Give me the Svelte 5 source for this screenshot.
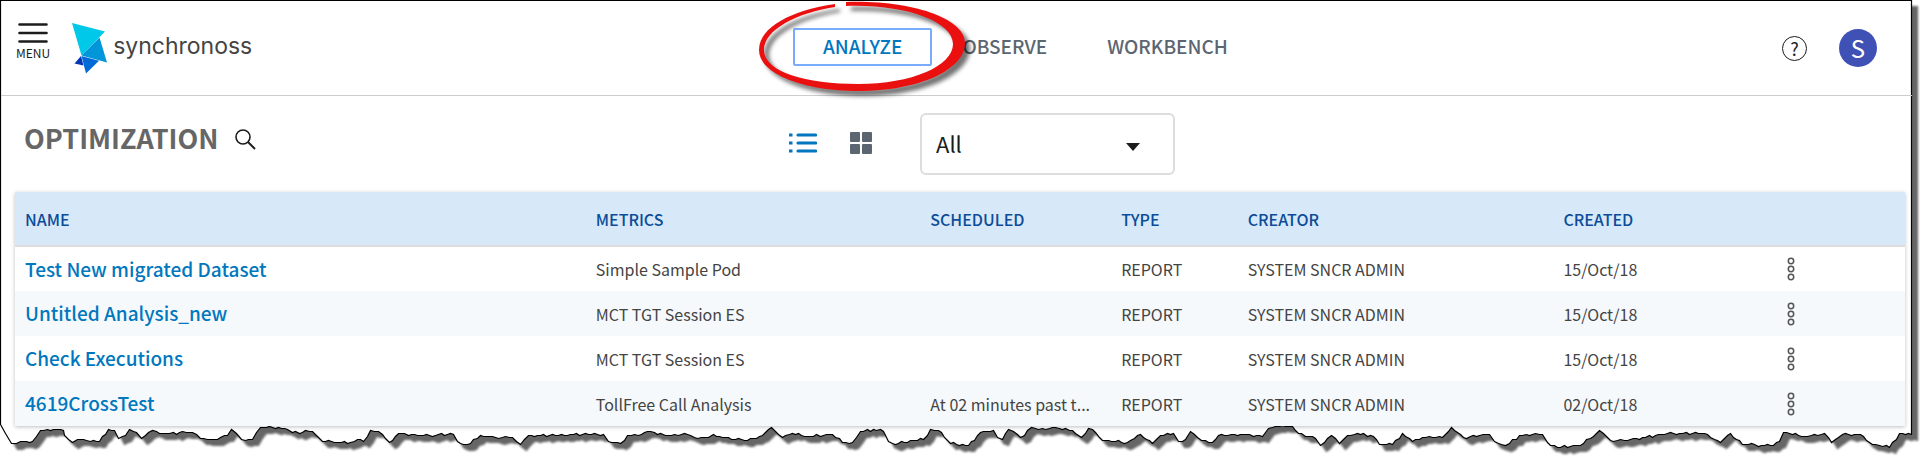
<script>
  const navItems = ['ANALYZE', 'OBSERVE', 'WORKBENCH'];
  let active = $state('ANALYZE');
  let filter = $state('All');

  const columns = [
    { label: 'NAME', key: 'name' },
    { label: 'METRICS', key: 'metrics' },
    { label: 'SCHEDULED', key: 'scheduled' },
    { label: 'TYPE', key: 'type' },
    { label: 'CREATOR', key: 'creator' },
    { label: 'CREATED', key: 'created' }
  ];

  const rows = [
    { name: 'Test New migrated Dataset', metrics: 'Simple Sample Pod', scheduled: '', created: '15/Oct/18' },
    { name: 'Untitled Analysis_new', metrics: 'MCT TGT Session ES', scheduled: '', created: '15/Oct/18' },
    { name: 'Check Executions', metrics: 'MCT TGT Session ES', scheduled: '', created: '15/Oct/18' },
    { name: '4619CrossTest', metrics: 'TollFree Call Analysis', scheduled: 'At 02 minutes past t...', created: '02/Oct/18' }
  ].map((r) => ({ ...r, type: 'REPORT', creator: 'SYSTEM SNCR ADMIN' }));

  // Key points of the torn lower edge, as x,y pairs
  const tear = `0,424 5,433 11,443 16,443 23,441 32,441 40,430 53,429 63,430 64,435 72,442 77,439 99,441 108,429 114,430 118,438 125,435 129,429 136,432 141,438 152,430 163,433 192,432 200,438 217,439 220,437 227,435 231,429 236,433 241,439 252,439 260,427 278,427 287,429 292,432 312,431 317,436 322,441 350,442 357,439 363,441 370,430 378,431 389,442 398,433 417,435 453,434 457,441 463,444 470,443 480,435
495,437 512,437 520,444 528,435 603,434 608,441 620,443 627,435 638,435 647,431 660,433 665,435 687,434 697,438 708,437 713,434 722,437 747,440 762,435 771,427 782,437 792,433 807,436 832,434 842,442 852,442 860,431 873,429 883,431 888,441 895,444 910,440 923,439 930,429 938,430 950,443 968,445
980,432 993,430 997,437 1002,439 1008,429 1013,431 1020,437 1031,427 1038,429 1052,427 1072,430 1081,437 1088,428 1095,432 1102,440 1127,442 1140,434 1152,443 1160,435 1173,433 1178,441 1185,439 1190,431 1201,440 1212,442 1218,435 1243,434 1262,436 1268,428 1282,425 1292,426 1298,433 1315,438 1320,445 1331,435 1339,443 1347,435 1357,433 1373,436 1379,444 1392,444 1402,433 1412,441 1422,437 1442,437
1451,427 1463,437 1489,434 1494,441 1505,445 1519,435 1542,434 1547,442 1557,447 1580,445 1599,430 1610,440 1627,440 1667,433 1704,433 1720,442 1730,433 1742,444 1770,445 1779,441 1783,432 1804,436 1824,433 1831,442 1842,434 1860,434 1872,444 1889,447 1899,433 1911,434`
    .trim()
    .split(/\s+/)
    .map((p) => p.split(',').map(Number));

  // Adds small steps between the key points so the paper edge looks rough
  function roughen(points) {
    const out = [points[0]];
    const steps = [0, -1, 0, 1, 0, 0, -1, 1, 0, -1, 0];
    let n = 0;
    for (let i = 1; i < points.length; i++) {
      const [x0, y0] = points[i - 1];
      const [x1, y1] = points[i];
      const count = Math.floor((x1 - x0) / 3);
      for (let k = 1; k < count; k++) {
        const t = k / count;
        out.push([Math.round(x0 + (x1 - x0) * t), Math.round(y0 + (y1 - y0) * t) + steps[n++ % steps.length]]);
      }
      out.push([x1, y1]);
    }
    return out;
  }

  const sheet =
    'M0.5 0.5H1911.5V434.5' +
    roughen(tear)
      .reverse()
      .map(([x, y]) => `L${x + 0.5} ${y + 0.5}`)
      .join('') +
    'Z';
</script>

<div class="page">
  <svg class="sheet" viewBox="0 0 1927 470" preserveAspectRatio="none" aria-hidden="true">
    <path d={sheet} fill="#fff" stroke="#000" stroke-width="1.200" vector-effect="non-scaling-stroke" />
  </svg>

  <div class="content">
    <header>
      <div class="brand">
        <button class="menu">
          <svg width="30" height="20" viewBox="0 0 30 20" aria-hidden="true">
            <path d="M1.5 1.5h27M1.5 10h27M1.5 18.5h27" stroke="#1c1c1c" stroke-width="2.6" stroke-linecap="round" />
          </svg>
          <span>MENU</span>
        </button>
        <a class="logo" href="#home">
          <svg width="36" height="51" viewBox="0 0 36 51" aria-hidden="true">
            <path d="M0 0l33 8.500L9.500 32.500z" fill="#00c8e8" />
            <path d="M27.500 14.500L35 39.500 9.500 32.500z" fill="#0096d9" />
            <path d="M9.500 33L27 37.800 14 50.500z" fill="#006ad6" />
            <path d="M9 33L2.500 40.500l9 2z" fill="#0038b6" />
          </svg>
          <span>synchronoss</span>
        </a>
      </div>

      <nav>
        {#each navItems as item}
          <a href={'#' + item.toLowerCase()} class:active={active === item} onclick={() => (active = item)}>
            {item}
            {#if item === 'ANALYZE'}
              <svg class="marker" width="220" height="100" viewBox="0 0 220 100" aria-hidden="true">
                <path
                  fill="#eb1010"
                  d="M81 4C38 10 5 27 5 50C5 74 50 91 104 91C165 91 211 70 211 43C211 19 160 0 92 2V6C150 4 199 21 199 44C199 66 158 84 104 84C52 84 10 72 10 50C10 30 42 13 81 7Z"
                />
              </svg>
            {/if}
          </a>
        {/each}
      </nav>

      <div class="account">
        <button class="help" aria-label="Help">?</button>
        <button class="avatar" aria-label="Account">S</button>
      </div>
    </header>

    <section class="toolbar">
      <div class="heading">
        <h1>OPTIMIZATION</h1>
        <button class="icon" aria-label="Search">
          <svg width="21" height="21" viewBox="0 0 21 21" fill="none" stroke="#1c1c1c" stroke-width="1.600">
            <circle cx="8" cy="8" r="7" />
            <path d="M13 13l7 7" stroke-width="2" />
          </svg>
        </button>
      </div>

      <div class="tools">
        <button class="icon" aria-label="List view">
          <svg width="28" height="22" viewBox="0 0 28 22" fill="none" stroke="#0077be" stroke-width="3.200">
            <path d="M0 3h3.500M0 11h3.500M0 19h3.500" />
            <path d="M9 3h17.500M9 11h17.500M9 19h17.500" stroke-linecap="round" />
          </svg>
        </button>
        <button class="icon" aria-label="Card view">
          <svg width="22" height="22" viewBox="0 0 22 22" fill="#5c6670">
            <rect width="10" height="10" rx="1" />
            <rect x="12" width="10" height="10" rx="1" />
            <rect y="12" width="10" height="10" rx="1" />
            <rect x="12" y="12" width="10" height="10" rx="1" />
          </svg>
        </button>
        <div class="filter">
          <select bind:value={filter} aria-label="Filter analyses">
            <option>All</option>
            <option>Reports</option>
          </select>
          <svg width="14" height="8" viewBox="0 0 14 8" aria-hidden="true"><path d="M0 0h14L7 8z" fill="#1c1c1c" /></svg>
        </div>
      </div>
    </section>

    <table>
      <colgroup>
        {#each columns as col}<col class={col.key} />{/each}
        <col />
      </colgroup>
      <thead>
        <tr>
          {#each columns as col}<th scope="col">{col.label}</th>{/each}
          <td></td>
        </tr>
      </thead>
      <tbody>
        {#each rows as row}
          <tr>
            {#each columns as col}
              <td>
                {#if col.key === 'name'}<a href="#analysis">{row.name}</a>{:else}{row[col.key]}{/if}
              </td>
            {/each}
            <td>
              <button class="more" aria-label={'Actions for ' + row.name}>
                <svg width="8" height="24" viewBox="0 0 8 24" fill="none" stroke="#555" stroke-width="1.500">
                  <circle cx="4" cy="4" r="2.700" />
                  <circle cx="4" cy="12" r="2.700" />
                  <circle cx="4" cy="20" r="2.700" />
                </svg>
              </button>
            </td>
          </tr>
        {/each}
      </tbody>
    </table>
  </div>
</div>

<style>
  :global(body) {
    background: #fff;
  }
  .page {
    position: relative;
    box-sizing: border-box;
    padding-bottom: 44px;
    overflow: hidden;
    font-family: 'Noto Sans CJK SC', 'Noto Sans', sans-serif;
    color: #444;
  }
  .sheet {
    position: absolute;
    inset: 0;
    width: 100%;
    height: 100%;
    filter: drop-shadow(6px 6px 1px rgba(0, 0, 0, 0.6));
  }
  .content {
    position: relative;
    padding: 1px 15px 0 1px;
  }
  button {
    border: 0;
    padding: 0;
    background: none;
    font-family: inherit;
    color: inherit;
    cursor: pointer;
  }
  a {
    text-decoration: none;
  }
  svg {
    display: block;
  }
  header {
    display: grid;
    grid-template-columns: 793fr auto 655fr;
    align-items: center;
    height: 94px;
    border-bottom: 1px solid #ccc;
  }
  .brand {
    display: flex;
    align-items: center;
    gap: 22px;
    padding-left: 15px;
  }
  .menu {
    display: flex;
    flex-direction: column;
    align-items: center;
    gap: 1px;
    margin-bottom: 12px;
    font-size: 12px;
    line-height: 18px;
    color: #1c1c1c;
  }
  .logo {
    display: flex;
    align-items: center;
    gap: 5px;
    font-family: Inter, 'Liberation Sans', sans-serif;
    font-size: 23px;
    line-height: 28px;
    color: #444;
  }
  .logo span {
    padding-bottom: 4px;
  }
  nav {
    display: flex;
    align-self: start;
    padding-top: 27px;
  }
  nav a {
    position: relative;
    padding: 0 28px 2px;
    border: 2px solid transparent;
    border-radius: 2px;
    font-size: 19px;
    font-weight: 500;
    line-height: 32px;
    color: #5c6670;
  }
  nav a.active {
    border-color: #7aacfe;
    color: #0077be;
    z-index: 1;
  }
  .marker {
    position: absolute;
    left: -41px;
    top: -30px;
    overflow: visible;
    pointer-events: none;
    filter: drop-shadow(5px 5px 2px rgba(0, 0, 0, 0.55));
  }
  .account {
    display: flex;
    align-items: center;
    justify-content: flex-end;
    gap: 32px;
    padding-right: 35px;
  }
  .help {
    width: 25px;
    height: 25px;
    border: 1px solid #1c1c1c;
    border-radius: 50%;
    font-size: 18px;
    line-height: 22px;
    color: #1c1c1c;
  }
  .avatar {
    width: 38px;
    height: 38px;
    border-radius: 50%;
    background: #3f51b5;
    font-size: 24px;
    line-height: 38px;
    color: #fff;
  }
  .toolbar {
    display: grid;
    grid-template-columns: 788fr 1123fr;
    align-items: center;
    height: 96px;
  }
  .heading {
    display: flex;
    align-items: center;
    gap: 16px;
    padding: 0 0 10px 23px;
  }
  h1 {
    margin: 0;
    padding-bottom: 2px;
    font-size: 27px;
    line-height: 36px;
    font-weight: 700;
    color: #666;
  }
  .tools {
    display: flex;
    align-items: center;
    gap: 33px;
  }
  .tools .icon {
    padding-bottom: 2px;
  }
  .filter {
    position: relative;
    margin-left: 15px;
  }
  select {
    appearance: none;
    box-sizing: border-box;
    width: 255px;
    height: 62px;
    padding: 0 14px 2px;
    border: 2px solid #ddd;
    border-radius: 6px;
    background: #fff;
    font-family: inherit;
    font-size: 22px;
    color: #1c1c1c;
  }
  .filter svg {
    position: absolute;
    right: 35px;
    top: 30px;
    pointer-events: none;
  }
  table {
    width: calc(100% - 21px);
    margin-left: 14px;
    border-collapse: collapse;
    table-layout: fixed;
    box-shadow: 0 1px 4px rgba(0, 0, 0, 0.25);
  }
  .name { width: 30.2%; }
  .metrics { width: 17.7%; }
  .scheduled { width: 10.1%; }
  .type { width: 6.7%; }
  .creator { width: 16.7%; }
  .created { width: 11.5%; }
  th,
  td {
    padding: 0 10px;
    text-align: left;
    overflow: hidden;
    text-overflow: ellipsis;
    white-space: nowrap;
    font-size: 16px;
    line-height: 24px;
  }
  thead tr {
    height: 54px;
    background: #d7e9f8;
    border-bottom: 2px solid #ddd;
  }
  th {
    font-weight: 500;
    color: #0c4c98;
  }
  tbody tr {
    height: 45px;
    background: #fff;
  }
  tbody tr:nth-child(even) {
    background: #f5f9fc;
  }
  td a {
    font-size: 19px;
    font-weight: 500;
    color: #0077be;
  }
  .more {
    display: flex;
    justify-content: center;
    width: 20px;
  }
</style>
